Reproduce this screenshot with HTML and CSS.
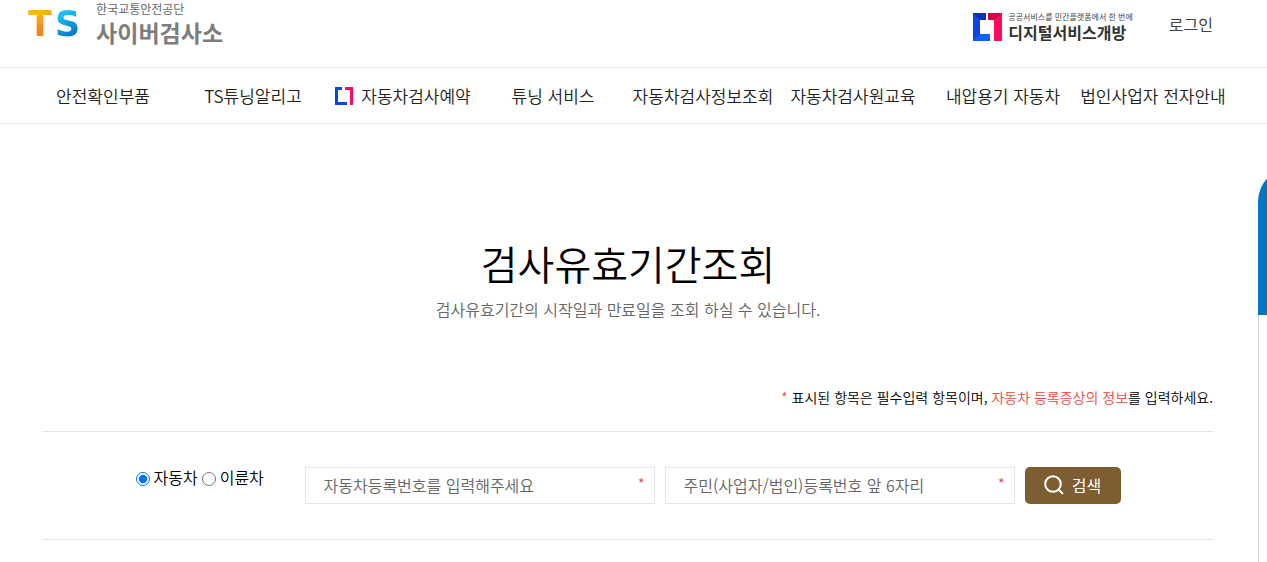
FILE: index.html
```html
<!DOCTYPE html>
<html lang="ko">
<head>
<meta charset="UTF-8">
<meta name="viewport" content="width=device-width, initial-scale=1.0">
<title>검사유효기간조회 | 사이버검사소</title>
<link rel="stylesheet" href="styles.css">
</head>
<body>
<header class="header">
    <div class="header-inner">
        <a class="logo" href="#">
            <span class="logo-mark"><span class="logo-t">T</span><span class="logo-s">S</span></span>
            <span class="logo-text">
                <span class="logo-org">한국교통안전공단</span>
                <span class="logo-name">사이버검사소</span>
            </span>
        </a>
        <div class="header-links">
            <a class="digital" href="#">
                <svg class="digital-mark" width="29" height="28" viewBox="0 0 29 28" aria-hidden="true">
                    <path d="M0 0h13v7H7v14h10v7H0z" fill="#0a46e4"/>
                    <path d="M0 0h13v7H7z" fill="#0932b4"/>
                    <path d="M0 28l7-7h10v7z" fill="#0a62fb"/>
                    <path d="M15 0h14v28h-8V7h-6z" fill="#ff0a5c"/>
                    <path d="M15 0h14l-8 7h-6z" fill="#cf0845"/>
                </svg>
                <span class="digital-text">
                    <span class="digital-sub">공공서비스를 민간플랫폼에서 한 번에</span>
                    <span class="digital-name">디지털서비스개방</span>
                </span>
            </a>
            <a class="login" href="#">로그인</a>
        </div>
    </div>
</header>

<nav class="nav">
    <ul class="nav-list">
        <li><a href="#">안전확인부품</a></li>
        <li><a href="#">TS튜닝알리고</a></li>
        <li>
            <a href="#">
                <svg width="18" height="18" viewBox="0 0 18 18" aria-hidden="true">
                    <path d="M0 0h7v3H3v12h9v3H0z" fill="#0a46e4"/>
                    <path d="M10 0h8v18h-3V3h-5z" fill="#ff0a5c"/>
                </svg>
                자동차검사예약
            </a>
        </li>
        <li><a href="#">튜닝 서비스</a></li>
        <li><a href="#">자동차검사정보조회</a></li>
        <li><a href="#">자동차검사원교육</a></li>
        <li><a href="#">내압용기 자동차</a></li>
        <li><a href="#">법인사업자 전자안내</a></li>
    </ul>
</nav>

<main class="content">
    <h1 class="title">검사유효기간조회</h1>
    <p class="subtitle">검사유효기간의 시작일과 만료일을 조회 하실 수 있습니다.</p>
    <p class="notice"><span class="red">*</span> 표시된 항목은 필수입력 항목이며, <span class="red">자동차 등록증상의 정보</span>를 입력하세요.</p>

    <form class="search-form">
        <div class="car-type" role="radiogroup" aria-label="차종">
            <input type="radio" id="car" name="type" checked>
            <label for="car">자동차</label>
            <input type="radio" id="bike" name="type">
            <label for="bike">이륜차</label>
        </div>
        <div class="field">
            <input type="text" id="carNo" aria-label="자동차등록번호" placeholder="자동차등록번호를 입력해주세요">
            <span class="required">*</span>
        </div>
        <div class="field">
            <input type="text" id="ownerNo" aria-label="주민(사업자/법인)등록번호" placeholder="주민(사업자/법인)등록번호 앞 6자리">
            <span class="required">*</span>
        </div>
        <button class="search-btn" type="button">
            <svg width="20" height="20" viewBox="0 0 20 20" fill="none" stroke="#fff" stroke-width="2" aria-hidden="true">
                <circle cx="9" cy="9" r="7.8"/>
                <path d="M14.5 14.5l4.5 4.5"/>
            </svg>
            검색
        </button>
    </form>
</main>

<aside class="quick">
    <div class="quick-panel">
        <div class="quick-head"></div>
        <div class="quick-body"></div>
    </div>
</aside>
</body>
</html>
```
FILE: styles.css
```css
* {
    box-sizing: border-box;
}

body {
    margin: 0;
    background-color: #fff;
    color: #000;
    font-family: "Noto Sans CJK KR", sans-serif;
    font-size: 16px;
}

a {
    color: inherit;
    text-decoration: none;
}

/* header */
.header {
    padding: 0 39px 19px 28px;
    border-bottom: 1px solid #ebebeb;
}

.header-inner {
    max-width: 1200px;
    height: 48px;
    margin: 0 auto;
    display: flex;
    justify-content: space-between;
    align-items: center;
}

.logo {
    display: flex;
    align-items: center;
    gap: 16px;
}

.logo-mark {
    display: flex;
    gap: 3px;
    font-family: "DejaVu Sans", sans-serif;
    font-size: 35px;
    font-weight: 700;
    line-height: 48px;
}

.logo-t,
.logo-s {
    color: transparent;
    background-clip: text;
    -webkit-background-clip: text;
}

.logo-t {
    background-image: linear-gradient(160deg, #fdb913 30%, #f58220 60%);
}

.logo-s {
    background-image: linear-gradient(150deg, #1cc0f0 30%, #0072c6 75%);
}

.logo-text,
.digital-text {
    display: flex;
    flex-direction: column;
}

.logo-text {
    gap: 2px;
}

.logo-org {
    color: #666;
    font-size: 12px;
    line-height: 14px;
}

.logo-name {
    color: #7d7d7d;
    font-size: 23px;
    font-weight: 700;
    line-height: 28px;
}

.header-links {
    display: flex;
    align-items: center;
    gap: 36px;
    padding-right: 15px;
}

.digital {
    display: flex;
    align-items: center;
    gap: 6px;
    padding-top: 5px;
}

.digital-sub {
    color: #444;
    font-size: 8px;
    line-height: 10px;
}

.digital-name {
    color: #333;
    font-size: 16px;
    font-weight: 700;
    line-height: 20px;
}

.login {
    color: #444;
}

/* main menu */
.nav {
    padding: 0 39px 0 28px;
    border-bottom: 1px solid #ebebeb;
}

.nav-list {
    max-width: 1200px;
    margin: 0 auto;
    padding: 0;
    list-style: none;
    display: grid;
    grid-template-columns: repeat(8, 1fr);
}

.nav-list a {
    display: flex;
    justify-content: center;
    align-items: center;
    gap: 8px;
    color: #222;
    font-size: 17px;
    font-weight: 350;
    line-height: 55px;
    white-space: nowrap;
}

/* content */
.content {
    padding: 109px 54px 0 43px;
}

.title {
    margin: 0 0 2px;
    font-size: 40px;
    font-weight: 350;
    line-height: 60px;
    text-align: center;
}

.subtitle {
    margin: 0;
    color: #666;
    font-size: 16px;
    font-weight: 350;
    line-height: 28px;
    text-align: center;
}

.notice {
    max-width: 1170px;
    margin: 64px auto 24px;
    font-size: 14px;
    font-weight: 350;
    line-height: 20px;
    text-align: right;
}

.red,
.required {
    color: #e74c3c;
}

.search-form {
    max-width: 1170px;
    margin: 0 auto;
    padding: 35px 0;
    border-top: 1px solid #e5e5e5;
    border-bottom: 1px solid #e5e5e5;
    display: flex;
    justify-content: center;
    gap: 10px;
}

.car-type {
    flex: 0 0 159px;
    display: flex;
    align-items: center;
    gap: 4px;
    height: 20px;
    font-weight: 350;
}

.car-type input {
    flex: none;
    width: 14px;
    height: 14px;
    margin: 4px 0 0;
}

.field {
    position: relative;
    flex: 0 1 350px;
}

.field input {
    width: 100%;
    height: 37px;
    padding: 0 18px 2px;
    border: 1px solid #e5e5e5;
    font-family: inherit;
    font-size: 16px;
    font-weight: 350;
}

.field input::placeholder {
    color: #666;
}

.required {
    position: absolute;
    top: 6px;
    right: 10px;
    font-size: 14px;
    line-height: 20px;
}

.search-btn {
    flex: none;
    width: 96px;
    height: 37px;
    padding: 0 0 1px;
    border: none;
    border-radius: 5px;
    background-color: #7d5d32;
    color: #fff;
    font-family: inherit;
    font-size: 16px;
    cursor: pointer;
    display: flex;
    justify-content: center;
    align-items: center;
    gap: 8px;
}

/* quick menu, folded at the right edge */
.quick {
    position: fixed;
    top: 167px;
    right: 0;
    bottom: 0;
    width: 9px;
    overflow: hidden;
}

.quick-panel {
    width: 100px;
    height: 100%;
    display: flex;
    flex-direction: column;
}

.quick-head {
    height: 148px;
    border-radius: 35px 35px 0 0;
    background-color: #0075c2;
}

.quick-body {
    flex: 1;
    border-left: 1px solid #d5d5d5;
    background-color: #fff;
}
```
